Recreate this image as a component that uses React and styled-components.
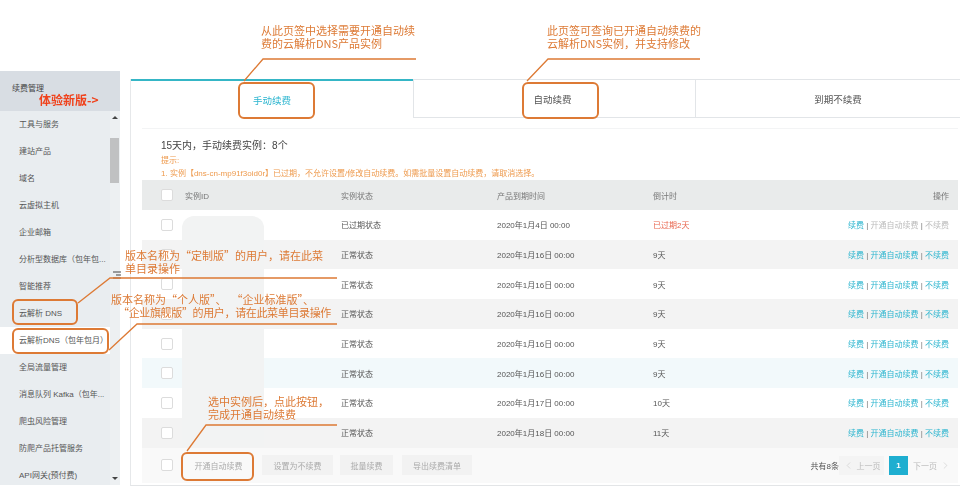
import React from "react";
import styled, { createGlobalStyle } from "styled-components";
import { ChevronLeft, ChevronRight } from "lucide-react";

const ORANGE = "#dd7a35";
const TEAL = "#2bb5cf";

const GlobalStyle = createGlobalStyle`
  html, body { margin: 0; padding: 0; background: #fff; }
  body { font-family: "Liberation Sans", "Noto Sans CJK SC", sans-serif; color: #555; }
`;

const Page = styled.div`
  position: relative;
  width: 960px;
  height: 500px;
  overflow: hidden;
  display: flex;
  align-items: flex-start;
  padding-top: 71px;
  box-sizing: border-box;
  filter: blur(0.35px);
`;

// sidebar
const Sidebar = styled.aside`
  width: 120px;
  flex: none;
  background: #e9edf0;
`;

const SideHead = styled.div`
  height: 40px;
  background: #d8dde3;
  padding: 13px 0 0 12px;
  box-sizing: border-box;
  font-size: 8px;
  line-height: 10px;
  color: #444;
`;

const SideBody = styled.div`
  display: flex;
  height: 374px;
`;

const SideList = styled.ul`
  list-style: none;
  margin: 0;
  padding: 0;
  flex: 1;
  min-width: 0;
`;

const SideItem = styled.li`
  height: 27px;
  line-height: 27px;
  padding-left: 19px;
  font-size: 8px;
  color: #555;
  white-space: nowrap;
  width: ${(p) => (p.$active ? "120px" : "auto")};
  background: ${(p) => (p.$active ? "#fff" : "transparent")};
`;

const ScrollTrack = styled.div`
  width: 10px;
  flex: none;
  background: #edf0f2;
  padding-top: 27px;
  box-sizing: border-box;
  position: relative;
`;

const ScrollThumb = styled.div`
  width: 9px;
  height: 45px;
  background: #c0c1c2;
`;

const ScrollArrow = styled.span`
  position: absolute;
  left: 2px;
  ${(p) => (p.$down ? "bottom: 5px;" : "top: 5px;")}
  border-left: 3px solid transparent;
  border-right: 3px solid transparent;
  ${(p) => (p.$down ? "border-top: 3px solid #444;" : "border-bottom: 3px solid #444;")}
`;

const Collapse = styled.svg`
  position: absolute;
  left: 113px;
  top: 271px;
`;

// main area
const Main = styled.main`
  margin: 8px 0 0 10px;
  flex: 1;
  min-width: 0;
  height: 406px;
  border-left: 1px solid #e6e8ea;
  border-bottom: 1px solid #e3e5e7;
  position: relative;
`;

const Tabs = styled.div`
  display: grid;
  grid-template-columns: 282px 282px 1fr;
  height: 39px;
`;

const Tab = styled.div`
  display: flex;
  align-items: center;
  justify-content: center;
  font-size: 9.5px;
  box-sizing: border-box;
  padding: 0 ${(p) => p.$right || 0}px 0 ${(p) => p.$left || 0}px;
  color: ${(p) => (p.$active ? TEAL : "#555")};
  border-top: ${(p) => (p.$active ? `2px solid #35b6c6` : "1px solid #e2e5e8")};
  border-bottom: ${(p) => (p.$active ? "0" : "1px solid #e2e5e8")};
  border-left: ${(p) => (p.$active ? "0" : "1px solid #e2e5e8")};
`;

const Panel = styled.section`
  margin: 10px 2px 0 11px;
  border-top: 1px solid #f3f4f5;
`;

const Title = styled.div`
  margin: 10px 0 0 19px;
  font-size: 10px;
  line-height: 14px;
  color: #444;
  height: 15px;
`;

const Hint = styled.div`
  margin-left: 19px;
  font-size: 8px;
  line-height: 13px;
  color: #ee9a4d;
  white-space: nowrap;
`;

const Row = styled.div`
  display: grid;
  grid-template-columns: 43px 156px 156px 156px 1fr;
  align-items: center;
  height: ${(p) => (p.$head ? "30px" : "29.7px")};
  background: ${(p) => p.$bg || "#fff"};
  font-size: 8px;
  color: ${(p) => (p.$head ? "#777" : "#555")};
  white-space: nowrap;
`;

const Check = styled.span`
  display: block;
  width: 10px;
  height: 10px;
  margin-left: 19px;
  background: #fff;
  border: 1px solid #dcdcdc;
  border-radius: 2px;
`;

const Remain = styled.span`
  color: ${(p) => (p.$late ? "#e8654d" : "#555")};
`;

const LastCell = styled.div`
  display: flex;
  justify-content: space-between;
  padding-right: 9px;
  color: #777;
`;

const ActionLink = styled.a`
  color: ${(p) => (p.$off ? "#bbb" : TEAL)};
`;

const Redact = styled.div`
  position: absolute;
  left: 51px;
  top: 137px;
  width: 82px;
  height: 231px;
  border-radius: 12px 12px 0 0;
  background: #f2f3f3;
`;

const Footer = styled.div`
  display: flex;
  align-items: center;
  height: 35px;
  background: #f9f9f9;
  font-size: 8px;
`;

const FootButton = styled.button`
  height: 20px;
  padding: 0;
  width: ${(p) => p.$w}px;
  margin-left: ${(p) => p.$gap}px;
  border: 0;
  background: ${(p) => (p.$plain ? "transparent" : "#f2f2f2")};
  color: #aaa;
  font: inherit;
`;

const Pager = styled.div`
  margin-left: auto;
  margin-right: 7px;
  display: flex;
  align-items: center;
`;

const Total = styled.span`
  color: #555;
  white-space: nowrap;
`;

const PageStep = styled.span`
  width: ${(p) => p.$w}px;
  height: 19px;
  display: flex;
  align-items: center;
  justify-content: center;
  gap: 3px;
  color: #bbb;
  white-space: nowrap;
  background: ${(p) => (p.$shade ? "#f4f4f4" : "transparent")};
  font-size: 8px;
`;

const PageNo = styled.span`
  width: 19px;
  height: 19px;
  margin: 0 5px;
  background: #1eaed0;
  color: #fff;
  font-weight: bold;
  display: flex;
  align-items: center;
  justify-content: center;
`;

// orange annotations on top of the page
const Overlay = styled.svg`
  position: absolute;
  inset: 0;
  pointer-events: none;
`;

const Mark = styled.div`
  position: absolute;
  left: ${(p) => p.$x}px;
  top: ${(p) => p.$y}px;
  width: ${(p) => p.$w}px;
  height: ${(p) => p.$h}px;
  box-sizing: border-box;
  border: 2px solid ${ORANGE};
  border-radius: 6px;
`;

const Note = styled.div`
  position: absolute;
  left: ${(p) => p.$x}px;
  top: ${(p) => p.$y}px;
  font-family: "Noto Sans CJK SC", "Liberation Sans", sans-serif;
  font-size: 11px;
  line-height: 13px;
  color: ${ORANGE};
  white-space: nowrap;
`;

const NoteLine = styled.span`
  display: block;
  margin-left: ${(p) => p.$indent || 0}px;
  letter-spacing: ${(p) => p.$tight || 0}px;
`;

const NewVersion = styled.strong`
  position: absolute;
  left: 39px;
  top: 93px;
  font-family: "Noto Sans CJK SC", sans-serif;
  font-size: 12px;
  line-height: 14px;
  color: #f0421c;
  white-space: nowrap;
`;

const ACTIVE_ITEM = "云解析DNS\uFF08包年包月\uFF09";

const sideItems = [
  "工具与服务", "建站产品", "域名", "云虚拟主机", "企业邮箱", "分析型数据库\uFF08包年包...",
  "智能推荐", "云解析 DNS", ACTIVE_ITEM, "全局流量管理",
  "消息队列 Kafka\uFF08包年...", "爬虫风险管理", "防爬产品托管服务", "API网关(预付费)",
];

const rows = [
  { status: "已过期状态", date: "2020年1月4日 00:00", left: "已过期2天", late: true, bg: "#fff" },
  { status: "正常状态", date: "2020年1月16日 00:00", left: "9天", bg: "#f3f3f3" },
  { status: "正常状态", date: "2020年1月16日 00:00", left: "9天", bg: "#fff" },
  { status: "正常状态", date: "2020年1月16日 00:00", left: "9天", bg: "#f3f3f3" },
  { status: "正常状态", date: "2020年1月16日 00:00", left: "9天", bg: "#fff" },
  { status: "正常状态", date: "2020年1月16日 00:00", left: "9天", bg: "#f2f9fb" },
  { status: "正常状态", date: "2020年1月17日 00:00", left: "10天", bg: "#fff" },
  { status: "正常状态", date: "2020年1月18日 00:00", left: "11天", bg: "#f3f3f3" },
];

const leaders = [
  "M244 81 L263 59 H416",
  "M527 81 L548 59 H700",
  "M78 303 L110 278 H337",
  "M109 350 L137 324 H337",
  "M187 451 L206 425 H337",
];

const App = () => {
  return (
    <Page>
      <GlobalStyle />
      <Sidebar>
        <SideHead>续费管理</SideHead>
        <SideBody>
          <SideList>
            {sideItems.map((name) => (
              <SideItem key={name} $active={name === ACTIVE_ITEM}>{name}</SideItem>
            ))}
          </SideList>
          <ScrollTrack>
            <ScrollArrow />
            <ScrollThumb />
            <ScrollArrow $down />
          </ScrollTrack>
        </SideBody>
      </Sidebar>
      <Collapse width="8" height="8" viewBox="0 0 8 8">
        <path d="M0 1H8M3 4H8M0 7H8" stroke="#444" strokeWidth="1" />
      </Collapse>

      <Main>
        <Tabs>
          <Tab $active>手动续费</Tab>
          <Tab $right={4}>自动续费</Tab>
          <Tab $left={20}>到期不续费</Tab>
        </Tabs>
        <Panel>
          <Title>15天内&#xFF0C;手动续费实例&#xFF1A;8个</Title>
          <Hint>提示:</Hint>
          <Hint>1. 实例【dns-cn-mp91f3oid0r】已过期&#xFF0C;不允许设置/修改自动续费。如需批量设置自动续费&#xFF0C;请取消选择。</Hint>
          <Row $head $bg="#e9ebeb">
            <Check />
            <span>实例ID</span>
            <span>实例状态</span>
            <span>产品到期时间</span>
            <LastCell>
              <span>倒计时</span>
              <span>操作</span>
            </LastCell>
          </Row>
          {rows.map((row, i) => (
            <Row key={i} $bg={row.bg}>
              <Check />
              <span />
              <span>{row.status}</span>
              <span>{row.date}</span>
              <LastCell>
                <Remain $late={row.late}>{row.left}</Remain>
                <span>
                  <ActionLink>续费</ActionLink> | <ActionLink $off={row.late}>开通自动续费</ActionLink> | <ActionLink $off={row.late}>不续费</ActionLink>
                </span>
              </LastCell>
            </Row>
          ))}
          <Footer>
            <Check />
            <FootButton $plain $w={49} $gap={21}>开通自动续费</FootButton>
            <FootButton $w={71} $gap={19}>设置为不续费</FootButton>
            <FootButton $w={53} $gap={7}>批量续费</FootButton>
            <FootButton $w={70} $gap={9}>导出续费清单</FootButton>
            <Pager>
              <Total>共有8条</Total>
              <PageStep $w={45} $shade><ChevronLeft size={11} strokeWidth={1} />上一页</PageStep>
              <PageNo>1</PageNo>
              <PageStep $w={38}>下一页<ChevronRight size={11} strokeWidth={1} /></PageStep>
            </Pager>
          </Footer>
        </Panel>
        <Redact />
      </Main>

      <Overlay width="960" height="500" viewBox="0 0 960 500" fill="none">
        {leaders.map((d) => (
          <path key={d} d={d} stroke={ORANGE} strokeWidth="1.300" />
        ))}
      </Overlay>
      <Mark $x={238} $y={82} $w={77} $h={37} />
      <Mark $x={522} $y={82} $w={77} $h={37} />
      <Mark $x={12} $y={299} $w={66} $h={26} />
      <Mark $x={12} $y={328} $w={97} $h={26} />
      <Mark $x={181} $y={452} $w={73} $h={29} />

      <Note $x={261} $y={24}>从此页签中选择需要开通自动续<br />费的云解析DNS产品实例</Note>
      <Note $x={547} $y={24}>此页签可查询已开通自动续费的<br />云解析DNS实例&#xFF0C;并支持修改</Note>
      <Note $x={125} $y={249}>版本名称为“定制版”的用户&#xFF0C;请在此菜<br />单目录操作</Note>
      <Note $x={111} $y={293}>
        <NoteLine>版本名称为“个人版”、&nbsp;&nbsp;“企业标准版”、</NoteLine>
        <NoteLine $indent={7} $tight={-0.35}>“企业旗舰版”的用户&#xFF0C;请在此菜单目录操作</NoteLine>
      </Note>
      <Note $x={208} $y={395}>选中实例后&#xFF0C;点此按钮&#xFF0C;<br />完成开通自动续费</Note>
      <NewVersion>体验新版-&gt;</NewVersion>
    </Page>
  );
};

export default App;
